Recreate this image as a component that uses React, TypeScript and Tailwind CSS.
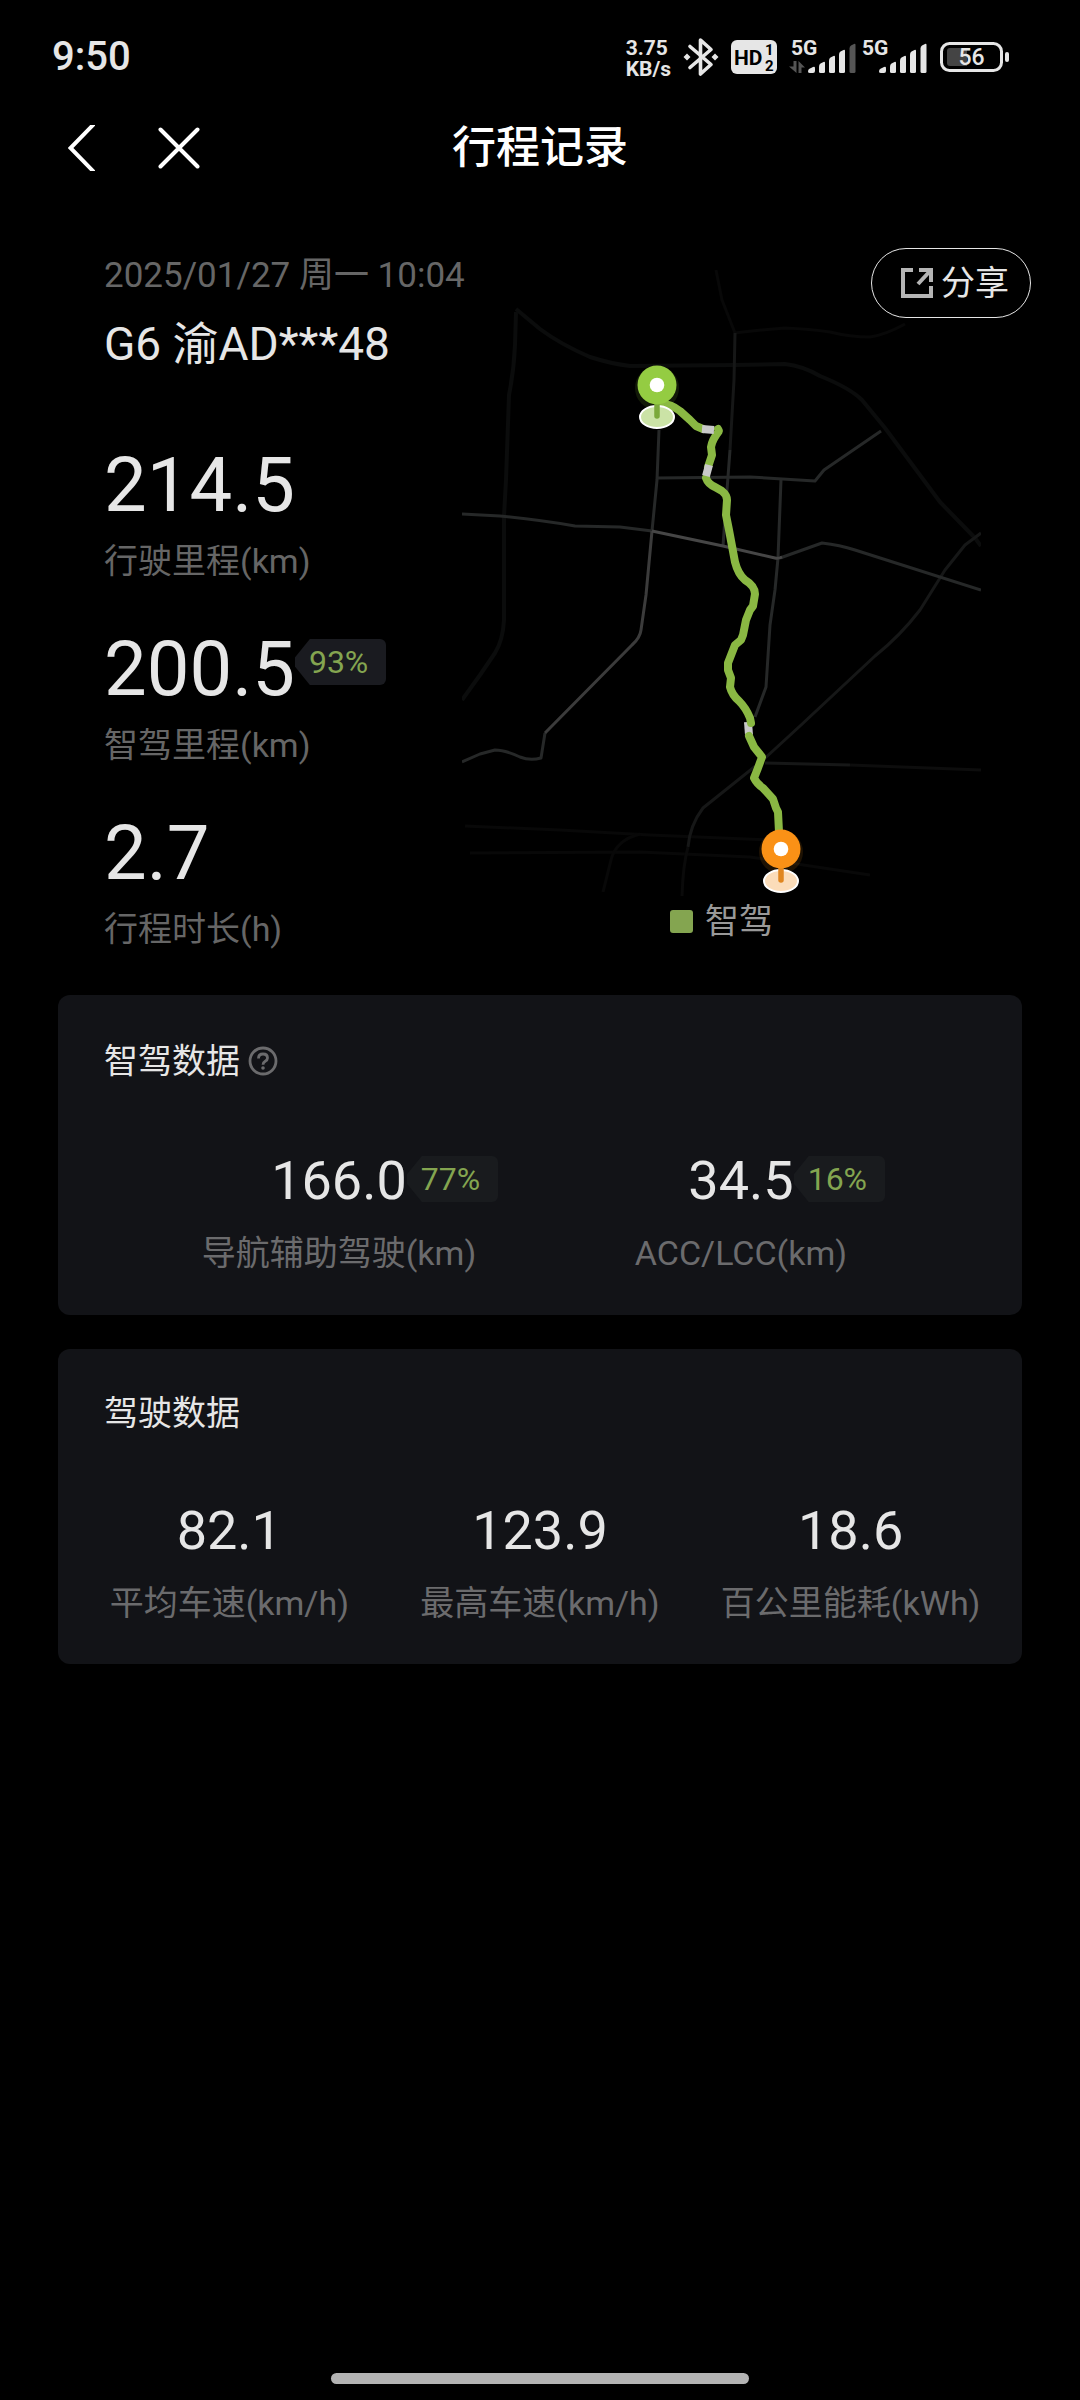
import type { ReactNode } from "react"

const tripStats = [
  { value: "214.5", label: "行驶里程(km)" },
  { value: "200.5", label: "智驾里程(km)", percent: "93%" },
  { value: "2.7", label: "行程时长(h)" },
]

const assistStats = [
  { value: "166.0", label: "导航辅助驾驶(km)", percent: "77%" },
  { value: "34.5", label: "ACC/LCC(km)", percent: "16%" },
]

const driveStats = [
  { value: "82.1", label: "平均车速(km/h)" },
  { value: "123.9", label: "最高车速(km/h)" },
  { value: "18.6", label: "百公里能耗(kWh)" },
]

function Signal({ weak = false, data = false }: { weak?: boolean; data?: boolean }) {
  return (
    <svg width="68" height="46" viewBox="0 -3 68 46" fill="#e6e6e6">
      <text x="2" y="18" fontSize="21" fontWeight="700">
        5G
      </text>
      {data && (
        <g fill="#555555">
          <path d="M4.5 24h3v12L0 29.500h4.500z" />
          <path d="M9.500 24l6.500 6.500h-3.500V36h-3z" />
        </g>
      )}
      <path d="M19 34.500q0-2 1.500-2.800l3.500-1.700q2-.8 2 1.200V34q0 2-2 2h-3q-2 0-2-1.500z" />
      <path d="M30 29.500q0-2 1.500-2.900l3-1.700q1.500-.7 1.500 1.200V34.500q0 1.500-1.500 1.500h-3q-1.500 0-1.500-1.500z" />
      <path d="M40 23.500q0-2 1.500-2.900l3-1.700q1.500-.7 1.500 1.200V34.500q0 1.500-1.500 1.500h-3q-1.500 0-1.500-1.500z" />
      <path d="M50 17.500q0-2 1.500-2.900l3-1.700q1.500-.7 1.500 1.200V34.500q0 1.500-1.500 1.500h-3q-1.500 0-1.500-1.500z" />
      <path
        d="M60.500 11.500q0-2 1.500-2.900l3-1.700q1.500-.7 1.500 1.200V34.500q0 1.500-1.500 1.500h-3q-1.500 0-1.500-1.500z"
        fill={weak ? "#555555" : "#e6e6e6"}
      />
    </svg>
  )
}

function StatusBar() {
  return (
    <div className="flex h-[50px] items-center justify-between pl-[52px] pr-[71px] text-[#e6e6e6]">
      <span className="text-[40px] leading-[50px] font-medium">9:50</span>
      <div className="flex items-center gap-3">
        <div className="pt-1 text-[21px] leading-[21px] font-bold">
          <div>3.75</div>
          <div>KB/s</div>
        </div>
        <svg width="36" height="40" viewBox="0 0 36 40" fill="none" stroke="#e6e6e6" strokeWidth="3.600">
          <path d="M7 9.500l21 18-10.500 9.500V3L28 12.500l-21 18" strokeLinejoin="round" strokeLinecap="round" />
          <path d="M4 16.500l3.500 3.500L4 23.500.5 20zM32 16.500l3.500 3.500-3.500 3.500-3.500-3.500z" fill="#e6e6e6" stroke="none" />
        </svg>
        <svg width="46" height="34" viewBox="0 0 46 34">
          <rect width="46" height="34" rx="6" fill="#e6e6e6" />
          <g fill="#000000" fontWeight="700">
            <text x="3" y="24.500" fontSize="21">
              HD
            </text>
            <text x="34" y="15" fontSize="15">
              1
            </text>
            <text x="34" y="31" fontSize="15">
              2
            </text>
          </g>
        </svg>
        <div className="flex gap-[3px]">
          <Signal weak data />
          <Signal />
        </div>
        <svg width="69" height="30" viewBox="0 0 69 30">
          <rect x="1.500" y="1.500" width="60" height="27" rx="8" fill="none" stroke="#e6e6e6" strokeWidth="3" />
          <path d="M10 6h17v18H10q-3 0-3-3V9q0-3 3-3z" fill="#444444" />
          <rect x="65" y="10" width="4" height="10" rx="2" fill="#e6e6e6" />
          <text x="31.500" y="23" fontSize="23" fontWeight="500" textAnchor="middle" fill="#e6e6e6">
            56
          </text>
        </svg>
      </div>
    </div>
  )
}

function Header() {
  return (
    <header className="mt-[34px] grid h-16 grid-cols-[1fr_auto_1fr] items-center">
      <div className="flex items-center gap-[63px] pl-[68px]">
        <button type="button" aria-label="返回">
          <svg width="27" height="46" viewBox="0 0 27 46" fill="none" stroke="#ffffff" strokeWidth="4">
            <path d="M27-2L2.500 23 27 48" />
          </svg>
        </button>
        <button type="button" aria-label="关闭">
          <svg width="42" height="42" viewBox="0 0 42 42" fill="none" stroke="#ffffff" strokeWidth="4" strokeLinecap="round">
            <path d="M2.500 2.500l37 37M39.500 2.500l-37 37" />
          </svg>
        </button>
      </div>
      <h1 className="text-[44px] leading-[64px] font-medium text-white">行程记录</h1>
    </header>
  )
}

function Pin({ x, y, color, stem, base }: { x: number; y: number; color: string; stem: string; base: string }) {
  return (
    <g transform={`translate(${x} ${y})`}>
      <circle r="22" cy="3" fill={color} opacity="0.12" />
      <ellipse cy="32" rx="17" ry="11" fill={base} stroke="#ffffff" strokeWidth="2" />
      <path d="M0 16v15" stroke={stem} strokeWidth="5.500" strokeLinecap="round" />
      <circle r="19.500" fill={color} />
      <circle r="7.300" fill="#ffffff" />
    </g>
  )
}

function RouteMap() {
  return (
    <svg className="h-auto w-full" viewBox="462 260 519 636" fill="none" strokeLinejoin="round">
      {/* outer roads */}
      <g stroke="#0b0c0c" strokeWidth="4">
        <path d="M516 312L515 345Q514 370 509 395L506 480L504 516L504 620Q503 640 495 653L480 675L462 700" />
        <path d="M516 309L540 329Q560 344 590 357Q612 364 630 366L735 365L785 364Q803 366 820 376Q850 388 862 400L885 428L940 502L975 538L981 546" />
      </g>
      <g stroke="#080808" strokeWidth="3">
        <path d="M735 333Q760 330 785 328Q810 329 830 332Q850 337 870 337Q885 335 905 324" />
        <path d="M465 826L560 830L650 835L770 840" />
        <path d="M470 853L640 852L750 857L870 875" />
        <path d="M603 892L611 860Q616 840 640 834" />
        <path d="M716 270L722 300L735 333" />
      </g>
      <g stroke="#161717" strokeWidth="3">
        <path d="M735 333L734 380L730 450" />
        <path d="M981 533L965 545L945 570L920 610Q900 636 875 656L860 670L800 726L763 760L703 808Q690 825 688 847" />
        <path d="M765 763L850 765" />
      </g>
      <path d="M850 765L981 770" stroke="#0d0d0d" strokeWidth="3" />
      <path d="M688 847Q683 865 682 896" stroke="#0a0a0a" strokeWidth="3" />
      {/* inner roads */}
      <g stroke="#262828" strokeWidth="3">
        <path d="M462 514L500 516Q540 520 575 526L620 527L652 531" />
        <path d="M730 450L727 490L723 546" />
        <path d="M657 478L750 477L815 481L824 470L881 431" />
        <path d="M781 480L778 558L775 590L770 625L766 687L755 717" />
        <path d="M659 430L657 480L652 531" />
        <path d="M545 733L541 758Q530 761 520 757Q505 750 495 750L480 754L462 762" />
        <path d="M780 558L822 543Q840 545 855 550L981 590" />
      </g>
      <path d="M652 531L646 595L641 630Q640 638 632 645L545 733" stroke="#3b3b3b" strokeWidth="3" />
      <path d="M652 531L723 546L775 558Q778 559 782 557" stroke="#464646" strokeWidth="3" />

      {/* driven route */}
      <path d="M748 722L749 735" stroke="#c9c9c9" strokeWidth="8" />
      <g stroke="#8ab843" strokeWidth="8" strokeLinecap="round">
        <path d="M660 404Q670 403 680 411L690 420L696 426L703 429M718 429L719 431Q712 440 711 447L712 455L708 467" />
        <path d="M706 478Q708 484 715 487L722 491Q727 495 727 500L726 515L729 530L735 562Q738 574 745 580Q755 586 755 594L753 606L750 610L746 620L743 635L741 640L735 645L728 663L728 670L731 678L730 687Q732 695 739 701Q746 708 750 718L751 723" />
        <path d="M749 736L754 747L762 757L758 768L754 778Q757 784 763 788L773 799L776 808L778 812L779 832" />
      </g>
      <g stroke="#c9c9c9" strokeWidth="8">
        <path d="M702 429L714 430M709 465L706 476" />
      </g>

      <Pin x={657} y={385} color="#94cc42" stem="#7ba93a" base="#cbe3a6" />
      <Pin x={781} y={849} color="#fa9116" stem="#e0861f" base="#fbdcb9" />
    </svg>
  )
}

function PercentTag({ children, bg }: { children: ReactNode; bg: string }) {
  return (
    <span
      className={`block h-[46px] rounded-r-md pr-[18px] pl-[14px] text-[32px] leading-[46px] text-[#84a550] [clip-path:polygon(15px_0,100%_0,100%_100%,15px_100%,0_60%,0_40%)] ${bg}`}
    >
      {children}
    </span>
  )
}

function Card({ title, extra, children, className }: { title: string; extra?: ReactNode; children: ReactNode; className: string }) {
  return (
    <section className={`rounded-xl bg-[#121317] ${className}`}>
      <div className="flex items-center gap-2 pl-[46px]">
        <h2 className="text-[34px] leading-12 text-[#e6e6e6]">{title}</h2>
        {extra}
      </div>
      {children}
    </section>
  )
}

export default function App() {
  return (
    <main className="flex min-h-screen flex-col bg-black pt-8 font-[Roboto,'Noto_Sans_CJK_SC',sans-serif]">
      <StatusBar />
      <Header />

      <section className="relative mt-[68px] flex pr-[99px] pl-[104px]">
        <div className="w-[358px] shrink-0 whitespace-nowrap">
          <p className="text-[35px] leading-14 text-[#666666]">2025/01/27 周一 10:04</p>
          <p className="mt-3 text-[46px] leading-14 text-[#e6e6e6]">G6 渝AD***48</p>
          <div className="mt-[73px] flex flex-col gap-11">
            {tripStats.map((stat) => (
              <div key={stat.label}>
                <div className="flex">
                  <span className="text-[76px] leading-20 text-[#e6e6e6]">{stat.value}</span>
                  {stat.percent && (
                    <div className="pt-[10px]">
                      <PercentTag bg="bg-[#1a1b20]">{stat.percent}</PercentTag>
                    </div>
                  )}
                </div>
                <p className="mt-3 text-[34px] leading-12 text-[#666666]">{stat.label}</p>
              </div>
            ))}
          </div>
        </div>

        <div className="min-w-0 flex-1 pt-3">
          <RouteMap />
          <div className="flex h-[50px] items-center justify-center gap-3 text-[34px] text-[#999999]">
            <span className="size-[23px] rounded-[3px] bg-[#84a550]" />
            智驾
          </div>
        </div>

        <button
          type="button"
          className="absolute top-0 right-[49px] flex h-[70px] w-[160px] items-center justify-center gap-2 rounded-full border border-[#e6e6e6] pl-2 text-[34px] text-[#e6e6e6]"
        >
          <svg width="32" height="32" viewBox="0 0 32 32" fill="none" stroke="#b5b5b5" strokeWidth="4">
            <path d="M12 3H2v26h28V19" />
            <path d="M18 3h12v12M30 3L17 17" />
          </svg>
          分享
        </button>
      </section>

      <div className="mx-[58px] mt-[42px] flex flex-col gap-[34px]">
        <Card
          title="智驾数据"
          className="pt-[42px] pb-[38px]"
          extra={
            <button type="button" aria-label="说明">
              <svg width="30" height="30" viewBox="0 0 30 30" fill="none" stroke="#6b6b6d" strokeWidth="2.800">
                <circle cx="15" cy="15" r="13" />
                <path d="M10.500 12.500Q10.500 8 15 8T19.500 12Q19.500 14 17.200 15.200Q15 16.500 15 18.800" />
                <circle cx="15" cy="22" r="1.800" fill="#6b6b6d" stroke="none" />
              </svg>
            </button>
          }
        >
          <div className="mt-16 grid grid-cols-2 px-20">
            {assistStats.map((stat) => (
              <div key={stat.label} className="flex flex-col items-center">
                <div className="relative">
                  <span className="block text-[54px] leading-16 text-[#e6e6e6]">{stat.value}</span>
                  <div className="absolute top-[7px] left-full">
                    <PercentTag bg="bg-[#191b1e]">{stat.percent}</PercentTag>
                  </div>
                </div>
                <p className="mt-4 text-[34px] leading-12 text-[#6b6b6d]">{stat.label}</p>
              </div>
            ))}
          </div>
        </Card>

        <Card title="驾驶数据" className="pt-10 pb-[37px]">
          <div className="mt-[62px] grid grid-cols-3 px-4">
            {driveStats.map((stat) => (
              <div key={stat.label} className="flex flex-col items-center">
                <span className="text-[54px] leading-16 text-[#e6e6e6]">{stat.value}</span>
                <p className="mt-4 text-[34px] leading-12 text-[#6b6b6d]">{stat.label}</p>
              </div>
            ))}
          </div>
        </Card>
      </div>

      <div className="mx-auto mt-auto mb-4 h-[11px] w-[418px] rounded-full bg-[#b3b3b3]" />
    </main>
  )
}
